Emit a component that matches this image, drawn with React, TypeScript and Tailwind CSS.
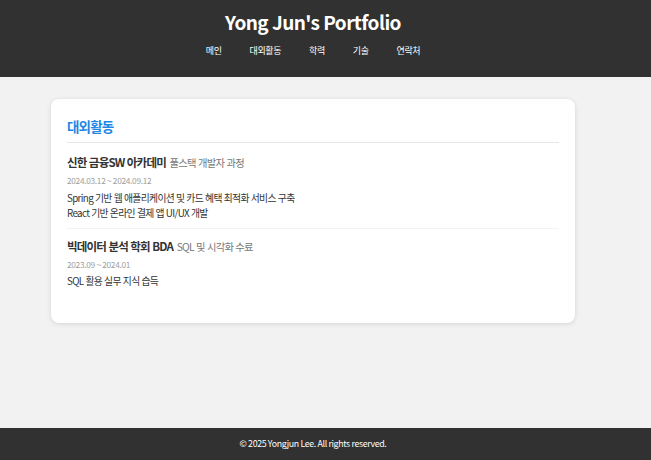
const font = {
  fontFamily: '"Noto Sans CJK KR", "Noto Sans", sans-serif',
};

type Activity = {
  title: string;
  sub: string;
  period: string;
  lines: string[];
};

const activities: Activity[] = [
  {
    title: "신한 금융SW 아카데미",
    sub: "풀스택 개발자 과정",
    period: "2024.03.12 ~ 2024.09.12",
    lines: [
      "Spring 기반 웹 애플리케이션 및 카드 혜택 최적화 서비스 구축",
      "React 기반 온라인 결제 앱 UI/UX 개발",
    ],
  },
  {
    title: "빅데이터 분석 학회 BDA",
    sub: "SQL 및 시각화 수료",
    period: "2023.09 ~ 2024.01",
    lines: ["SQL 활용 실무 지식 습득"],
  },
];

const navItems = ["메인", "대외활동", "학력", "기술", "연락처"];

export default function App() {
  return (
    <div
      className="flex min-h-[460px] flex-col bg-[#f2f2f2] text-[#333]"
      style={font}
    >
      <header className="flex h-[77px] flex-col items-center bg-[#313131] pt-[8px] pr-[25px] text-white">
        <h1 className="text-[19px] font-bold leading-[28px] tracking-[-0.55px]">
          Yong Jun's Portfolio
        </h1>
        <nav className="mt-[8px] flex gap-[28px] text-[9px] leading-[14px] tracking-[-0.4px]">
          {navItems.map((n) => (
            <span key={n}>{n}</span>
          ))}
        </nav>
      </header>

      <main className="flex-1 pt-[22px] pr-[25px]">
        <section className="mx-[51px] rounded-lg bg-white px-[16px] pt-[17px] pb-[34px] shadow-[0_1px_5px_rgba(0,0,0,0.12)]">
          <h2 className="border-b border-[#e6e6e6] pb-[6px] text-[13.5px] font-bold leading-[20px] tracking-[-0.8px] text-[#1f87e5]">
            대외활동
          </h2>
          {activities.map((a, i) => (
            <div
              key={a.title}
              className={
                i < activities.length - 1
                  ? "border-b border-[#f3f3f3] pt-[8px] pb-[7px]"
                  : "pt-[6px]"
              }
            >
              <div className="leading-[18px]">
                <span className="text-[11.5px] font-bold tracking-[-0.8px] text-[#333] [word-spacing:0.5px]">
                  {a.title}
                </span>{" "}
                <span className="text-[10.3px] tracking-[-0.7px] text-[#777] [word-spacing:0.5px]">
                  {a.sub}
                </span>
              </div>
              <div className="mt-[2px] text-[8.3px] leading-[12px] tracking-[-0.3px] text-[#a0a0a0]">
                {a.period}
              </div>
              <div className="mt-[4.5px] text-[9.8px] leading-[15px] tracking-[-0.65px] text-[#333] [word-spacing:0.4px]">
                {a.lines.map((l) => (
                  <div key={l}>{l}</div>
                ))}
              </div>
            </div>
          ))}
        </section>
      </main>

      <footer className="flex h-[32px] items-center justify-center bg-[#313131] pr-[25px] text-[8.8px] tracking-[-0.35px] text-white">
        © 2025 Yongjun Lee. All rights reserved.
      </footer>
    </div>
  );
}
